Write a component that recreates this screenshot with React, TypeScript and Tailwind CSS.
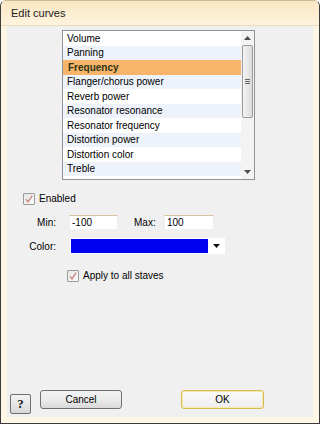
import React from 'react';

const FONT = { fontFamily: '"Liberation Sans", Arial, sans-serif' };

const CURVES = [
  'Volume',
  'Panning',
  'Frequency',
  'Flanger/chorus power',
  'Reverb power',
  'Resonator resonance',
  'Resonator frequency',
  'Distortion power',
  'Distortion color',
  'Treble',
] as const;

const SELECTED = 2;

function CheckBox() {
  return (
    <div className="flex h-[12px] w-[12px] items-center justify-center rounded-[1px] border border-[#9a9a9a] bg-gradient-to-br from-[#e6e6e6] to-[#fbfbfb]">
      <svg width="10" height="10" viewBox="0 0 10 10">
        <path d="M2 5.2 L4 8 L8.2 1.6" fill="none" stroke="#d08a84" strokeWidth="1.4" />
      </svg>
    </div>
  );
}

function ScrollBar() {
  return (
    <div className="flex w-[13px] flex-col bg-[#f3f3f3]">
      <div className="flex h-[14px] items-center justify-center">
        <svg width="7" height="4" viewBox="0 0 7 4">
          <path d="M0 4 L3.5 0 L7 4 Z" fill="#4d4d4d" />
        </svg>
      </div>
      <div className="mx-[1px] flex h-[73px] items-center justify-center rounded-[2px] border border-[#9c9c9c] bg-gradient-to-r from-[#f4f4f4] to-[#dcdcdc]">
        <div className="flex flex-col gap-[1px]">
          <div className="h-[1px] w-[5px] bg-[#666]" />
          <div className="h-[1px] w-[5px] bg-[#666]" />
          <div className="h-[1px] w-[5px] bg-[#666]" />
        </div>
      </div>
      <div className="flex-1" />
      <div className="flex h-[14px] items-center justify-center">
        <svg width="7" height="4" viewBox="0 0 7 4">
          <path d="M0 0 L3.5 4 L7 0 Z" fill="#4d4d4d" />
        </svg>
      </div>
    </div>
  );
}

function TextBox({ value, width }: { value: string; width: string }) {
  return (
    <div
      className={`flex h-[15px] items-center border border-[#eef0f2] border-t-[#d7c19c] bg-white pl-[2px] text-[10px] text-black ${width}`}
    >
      {value}
    </div>
  );
}

export default function App() {
  return (
    <div
      className="flex h-[424px] w-[320px] flex-col overflow-hidden rounded-t-[6px] border border-[#3c3c3c] border-t-[#cbbd9a] bg-[#fdf7e6]"
      style={FONT}
    >
      <div className="flex h-[25px] items-center border-b border-[#e9dcbc] bg-gradient-to-b from-[#fbe6c2] to-[#fdf4df] pl-[10px] text-[11px] text-[#1a1a1a]">
        Edit curves
      </div>

      <div className="mx-[6px] mb-[6px] flex flex-1 flex-col bg-[#f0f0f0] pt-[4px]">
        <div className="ml-[55px] flex h-[150px] w-[193px] border border-[#8e939b] bg-white">
          <div className="flex flex-1 flex-col">
            {CURVES.map((name, i) => (
              <div
                key={name}
                className={
                  i === SELECTED
                    ? 'flex h-[14.5px] items-center bg-[#f8b46a] pl-[5px] text-[10px] font-bold text-[#2c3414]'
                    : i % 2 === 1
                      ? 'flex h-[14.5px] items-center bg-[#eef3fb] pl-[4px] text-[10px] text-black'
                      : 'flex h-[14.5px] items-center bg-white pl-[4px] text-[10px] text-black'
                }
              >
                {name}
              </div>
            ))}
          </div>
          <ScrollBar />
        </div>

        <div className="ml-[16px] mt-[11px] flex items-center gap-[4px] text-[10px] text-black">
          <CheckBox />
          <span>Enabled</span>
        </div>

        <div className="mt-[9px] flex items-center text-[10px] text-black">
          <span className="w-[49px] text-right">Min:</span>
          <div className="ml-[13px]">
            <TextBox value="-100" width="w-[49px]" />
          </div>
          <span className="ml-[16px] w-[20px]">Max:</span>
          <div className="ml-[10px]">
            <TextBox value="100" width="w-[50px]" />
          </div>
        </div>

        <div className="mt-[8px] flex items-center text-[10px] text-black">
          <span className="w-[49px] text-right">Color:</span>
          <div className="ml-[14px] flex h-[16px] w-[155px] items-center bg-white p-[1px]">
            <div className="h-full w-[137px] bg-[#0000f0]" />
            <div className="flex flex-1 items-center justify-center">
              <svg width="7" height="4" viewBox="0 0 7 4">
                <path d="M0 0 L3.5 4 L7 0 Z" fill="#111" />
              </svg>
            </div>
          </div>
        </div>

        <div className="ml-[60px] mt-[14px] flex items-center gap-[4px] text-[10px] text-black">
          <CheckBox />
          <span>Apply to all staves</span>
        </div>

        <div className="mt-auto flex items-end pb-[3px] pl-[3px] text-[10px] text-black">
          <div
            className="flex h-[20px] w-[21px] items-center justify-center rounded-[2px] border border-[#6f6f6f] bg-gradient-to-b from-[#f4f4f4] to-[#d8d8d8] text-[13px] font-bold text-[#222]"
            style={{ fontFamily: '"Liberation Serif", "Times New Roman", serif' }}
          >
            ?
          </div>
          <div className="mb-[5px] ml-[9px] flex h-[19px] w-[82px] items-center justify-center rounded-[3px] border border-[#707070] bg-gradient-to-b from-[#f3f3f3] via-[#ebebeb] to-[#d9d9d9]">
            Cancel
          </div>
          <div className="mb-[5px] ml-[59px] flex h-[19px] w-[83px] items-center justify-center rounded-[3px] border border-[#d6bc4e] bg-gradient-to-b from-[#fafafa] to-[#eeeeee] shadow-[inset_0_0_0_1px_#f7eab0]">
            OK
          </div>
        </div>
      </div>
    </div>
  );
}
